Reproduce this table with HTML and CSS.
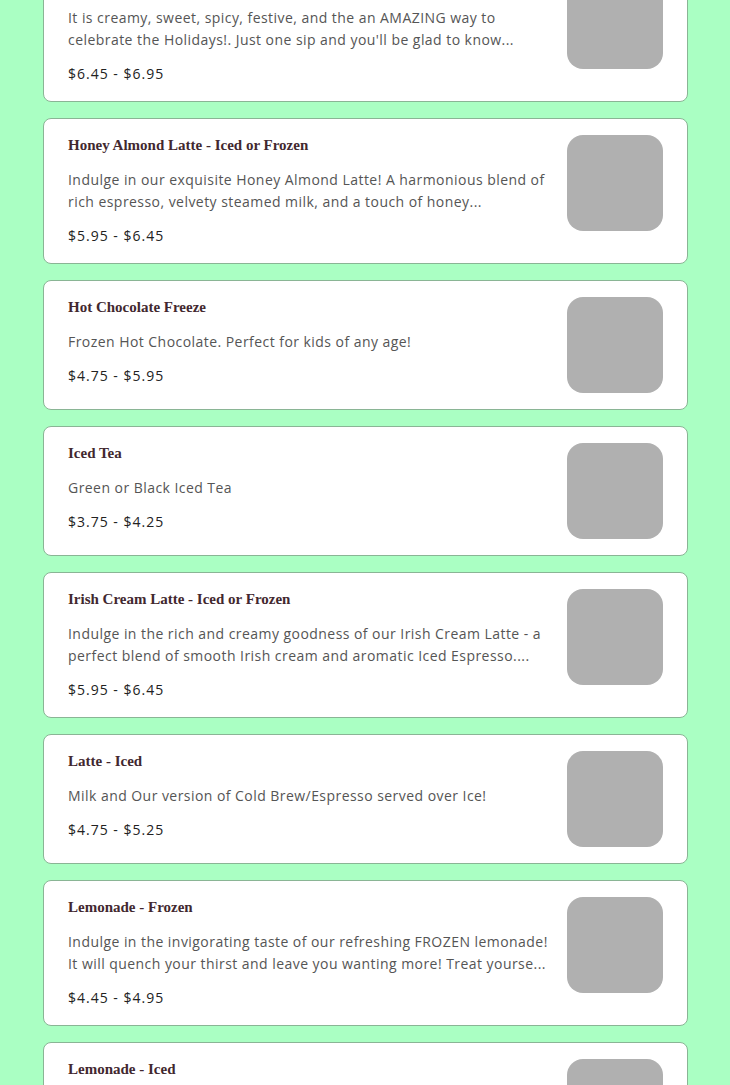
FILE: index.html
```html
<!DOCTYPE html>
<html lang="en">
<head>
<meta charset="utf-8">
<title>Menu</title>
<link rel="stylesheet" href="styles.css">
</head>
<body>
<main class="menu">
  <article class="item">
    <div class="info">
      <h3 class="name">Eggnog Latte</h3>
      <p class="desc"><span class="line">It is creamy, sweet, spicy, festive, and the an AMAZING way to</span> <span class="line">celebrate the Holidays!. Just one sip and you'll be glad to know...</span></p>
      <p class="price">$6.45 - $6.95</p>
    </div>
    <div class="thumb"></div>
  </article>
  <article class="item">
    <div class="info">
      <h3 class="name">Honey Almond Latte - Iced or Frozen</h3>
      <p class="desc"><span class="line">Indulge in our exquisite Honey Almond Latte! A harmonious blend of</span> <span class="line">rich espresso, velvety steamed milk, and a touch of honey...</span></p>
      <p class="price">$5.95 - $6.45</p>
    </div>
    <div class="thumb"></div>
  </article>
  <article class="item">
    <div class="info">
      <h3 class="name">Hot Chocolate Freeze</h3>
      <p class="desc">Frozen Hot Chocolate. Perfect for kids of any age!</p>
      <p class="price">$4.75 - $5.95</p>
    </div>
    <div class="thumb"></div>
  </article>
  <article class="item">
    <div class="info">
      <h3 class="name">Iced Tea</h3>
      <p class="desc">Green or Black Iced Tea</p>
      <p class="price">$3.75 - $4.25</p>
    </div>
    <div class="thumb"></div>
  </article>
  <article class="item">
    <div class="info">
      <h3 class="name">Irish Cream Latte - Iced or Frozen</h3>
      <p class="desc"><span class="line">Indulge in the rich and creamy goodness of our Irish Cream Latte - a</span> <span class="line">perfect blend of smooth Irish cream and aromatic Iced Espresso....</span></p>
      <p class="price">$5.95 - $6.45</p>
    </div>
    <div class="thumb"></div>
  </article>
  <article class="item">
    <div class="info">
      <h3 class="name">Latte - Iced</h3>
      <p class="desc">Milk and Our version of Cold Brew/Espresso served over Ice!</p>
      <p class="price">$4.75 - $5.25</p>
    </div>
    <div class="thumb"></div>
  </article>
  <article class="item">
    <div class="info">
      <h3 class="name">Lemonade - Frozen</h3>
      <p class="desc"><span class="line">Indulge in the invigorating taste of our refreshing FROZEN lemonade!</span> <span class="line">It will quench your thirst and leave you wanting more! Treat yourse...</span></p>
      <p class="price">$4.45 - $4.95</p>
    </div>
    <div class="thumb"></div>
  </article>
  <article class="item">
    <div class="info">
      <h3 class="name">Lemonade - Iced</h3>
      <p class="desc">Fresh squeezed lemonade served over ice.</p>
      <p class="price">$3.95 - $4.45</p>
    </div>
    <div class="thumb"></div>
  </article>
</main>
</body>
</html>
```
FILE: styles.css
```css
html, body {
  margin: 0;
  padding: 0;
  background: #aaffc3;
}
body {
  overflow: hidden;
  height: 1085px;
}
.menu {
  display: flex;
  flex-direction: column;
  gap: 16px;
  width: 645px;
  margin: -44px 0 0 43px;
}
.item {
  display: flex;
  align-items: flex-start;
  gap: 16px;
  padding: 16px 24px;
  background: #ffffff;
  border: 1px solid #8ab595;
  border-radius: 8px;
}
.info {
  flex: 1;
  min-width: 0;
}
.name {
  margin: 0 0 14px;
  font-family: "Liberation Serif", serif;
  font-weight: bold;
  font-size: 15px;
  line-height: 20px;
  letter-spacing: 0;
  color: #42282f;
}
.desc {
  margin: 0 0 12px;
  font-family: "Open Sans", sans-serif;
  font-size: 14px;
  line-height: 22px;
  letter-spacing: 0.45px;
  color: #555555;
}
.line {
  display: block;
  white-space: nowrap;
}
.price {
  margin: 0;
  font-family: "Open Sans", sans-serif;
  font-size: 14px;
  line-height: 22px;
  letter-spacing: 1px;
  color: #222222;
}
.thumb {
  flex: 0 0 96px;
  height: 96px;
  background: #b0b0b0;
  border-radius: 16px;
}
```
